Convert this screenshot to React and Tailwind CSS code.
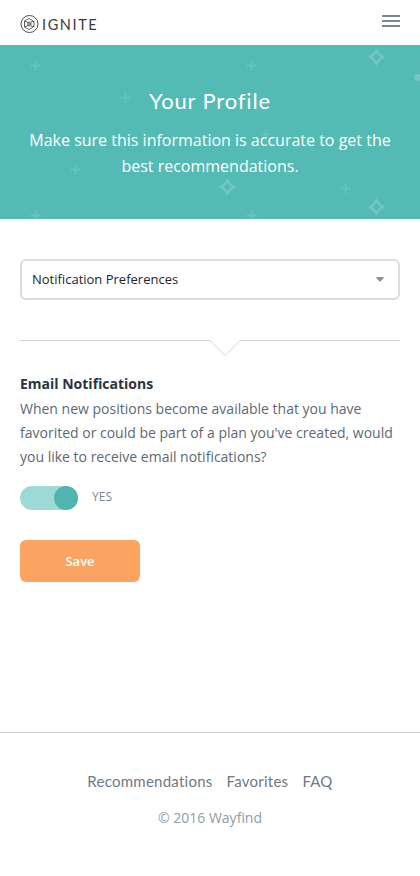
const pluses = [[35, 20], [125, 52], [75, 124], [35, 170], [251, 20], [265, 89], [345, 143], [251, 170]];
const stars = [[376, 12], [227, 142], [376, 162]];

function Logo() {
  return (
    <div className="relative flex items-center gap-[3px] text-[#3a3a3d]">
      <svg width="19" height="19" viewBox="0 0 19 19" fill="none" stroke="currentColor">
        <circle cx="9.500" cy="9" r="8.500" strokeWidth="0.9" />
        <path d="M9 3.500 14 6.500V11.500L9 14.500 4.500 12V6Z M4.500 6 8 7.500 14 6.500 M4.500 12 8 10.500 14 11.500 M8 7.500 11.500 9 8 10.500Z" strokeWidth="0.8" />
      </svg>
      <span className="font-['Lato',sans-serif] text-[14.5px] leading-[19px] tracking-[1.6px]">IGNITE</span>
    </div>
  );
}

function BannerPattern() {
  return (
    <svg className="absolute inset-0" width="420" height="174" fill="none" stroke="#fff" strokeOpacity="0.18" strokeWidth="2">
      {pluses.map(([x, y]) => (
        <path key={`${x}-${y}`} d={`M${x - 4.5} ${y + 0.5}h10M${x + 0.5} ${y - 4.5}v10`} strokeOpacity="0.13" />
      ))}
      {stars.map(([x, y]) => (
        <path key={`${x}-${y}`} d={`M${x + 0.5} ${y - 7}q2 5 7 7q-5 2-7 7q-2-5-7-7q5-2 7-7Z`} strokeWidth="2.6" strokeLinejoin="round" />
      ))}
      <circle cx="417.500" cy="32.500" r="3.500" fill="#fff" fillOpacity="0.2" stroke="none" />
    </svg>
  );
}

export default function App() {
  return (
    <div className="flex h-[876px] w-[420px] flex-col overflow-hidden bg-white font-['Open_Sans',sans-serif]">
      <header className="flex h-[45px] shrink-0 items-start justify-between px-5 pt-[15px]">
        <Logo />
        <button aria-label="Menu" className="flex w-[18px] flex-col gap-[3px]">
          <span className="h-[2px] bg-[#778797]" />
          <span className="h-[2px] bg-[#778797]" />
          <span className="h-[2px] bg-[#778797]" />
        </button>
      </header>

      <section className="relative h-[174px] shrink-0 bg-[#53bab4] pt-10 text-center text-white">
        <BannerPattern />
        <div className="relative">
          <h1 className="font-['Lato',sans-serif] text-[22px] leading-[32px] tracking-[0.850px]">Your Profile</h1>
          <p className="mt-[10px] text-[16px] leading-[26px]">
            Make sure this information is accurate to get the<br />best recommendations.
          </p>
        </div>
      </section>

      <main className="px-5 pt-10">
        <button className="flex h-[41px] w-full items-center justify-between rounded-md border-2 border-[#d8dde0] pr-[14px] pl-[10px] text-[13px] text-[#222629]">
          <span>Notification Preferences</span>
          <svg width="8" height="5" viewBox="0 0 8 5" fill="#87929c"><path d="M0 .5 .5 0h7L8 .5 4.500 4.500h-1Z" /></svg>
        </button>
        <svg className="mt-10 block" width="380" height="17" fill="none" stroke="#d0d5d9">
          <path d="M0 0.500H190L205 15.500 220 0.500H380" />
        </svg>
        <h2 className="mt-[15px] text-[14px] leading-[24px] font-bold text-[#29343e]">Email Notifications</h2>
        <p className="mt-px text-[14px] leading-[24px] text-[#5b6975]">
          When new positions become available that you have<br />favorited or could be part of a plan you've created, would<br />you like to receive email notifications?
        </p>
        <div className="mt-[17px] flex items-center gap-[14px]">
          <button role="switch" aria-checked="true" aria-label="Email notifications" className="flex h-6 w-[58px] justify-end rounded-full bg-[#9edad5]">
            <span className="size-6 rounded-full bg-[#4fb5ae]" />
          </button>
          <span className="mb-0.5 text-[12px] text-[#7d8995]">YES</span>
        </div>
        <button className="mt-[30px] block h-[42px] w-[120px] rounded-md bg-[#fba360] pt-[2px] text-[13px] font-semibold text-white">Save</button>
      </main>

      <footer className="mt-[150px] border-t border-[#c8cdd2] pt-[36px] text-center">
        <nav className="flex justify-center gap-[14px] font-['Lato',sans-serif] text-[15px] leading-[24px] tracking-[0.250px] text-[#6d7a86]">
          <a>Recommendations</a>
          <a>Favorites</a>
          <a>FAQ</a>
        </nav>
        <p className="mt-[13px] text-[14px] leading-[24px] text-[#929ca5]">© 2016 Wayfind</p>
      </footer>
    </div>
  );
}
